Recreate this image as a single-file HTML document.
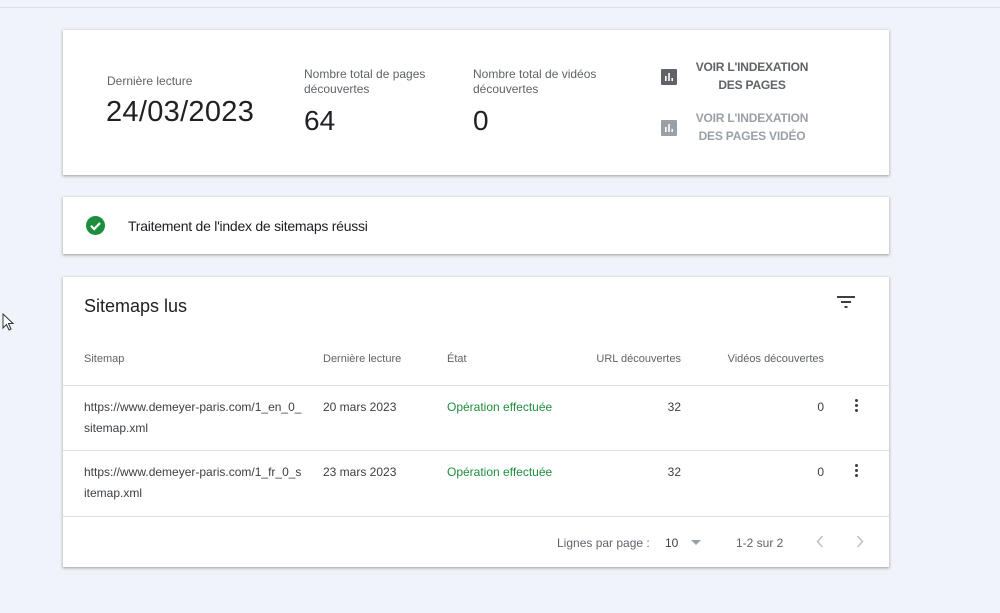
<!DOCTYPE html>
<html><head><meta charset="utf-8"><style>
body{margin:0;width:1000px;height:613px;background:#f1f3fa;font-family:"Liberation Sans",Arial,sans-serif;position:relative;overflow:hidden;color:#202124}
.a{position:absolute;white-space:nowrap}
.card{position:absolute;left:63px;width:826px;background:#fff;box-shadow:0 1px 2px rgba(60,64,67,.3),0 1px 3px 1px rgba(60,64,67,.15)}
.lbl{font-size:12px;color:#5f6368;line-height:15px}
.big{font-size:28px;color:#202124}
.btn{font-size:12px;font-weight:bold;color:#5f6368;text-align:center;line-height:18px;letter-spacing:-.2px}
.th{font-size:11px;color:#5f6368}
.td{font-size:12px;color:#3c4043;line-height:21px}
.hr{position:absolute;left:0;width:826px;height:1px;background:#e0e0e0}
.dots{position:absolute;width:3px}
.dots i{display:block;width:3px;height:3px;border-radius:50%;background:#3c4043;margin-bottom:2px}
</style></head><body>
<div class="a" style="left:0;top:7px;width:1000px;height:1px;background:#dde0e6"></div>
<svg class="a" style="left:2px;top:313px" width="12" height="19" viewBox="0 0 12 19"><path d="M1 1 L1 15 L4.5 11.5 L7 17 L9 16 L6.5 10.5 L11 10.5 Z" fill="#fff" stroke="#333" stroke-width="1"/></svg>

<div class="card" style="top:30px;height:145px">
 <div class="a lbl" style="left:44px;top:44px">Dernière lecture</div>
 <div class="a big" style="left:43px;top:66px;font-size:29px;letter-spacing:0.3px">24/03/2023</div>
 <div class="a lbl" style="left:241px;top:37px">Nombre total de pages<br>découvertes</div>
 <div class="a big" style="left:241px;top:75px">64</div>
 <div class="a lbl" style="left:410px;top:37px">Nombre total de vidéos<br>découvertes</div>
 <div class="a big" style="left:410px;top:75px">0</div>
 <svg class="a" style="left:598px;top:39px" width="16" height="16"><rect width="16" height="16" rx="1" fill="#5f6368"/><rect x="4" y="7" width="1.6" height="5" fill="#fff"/><rect x="7.2" y="4" width="1.6" height="8" fill="#fff"/><rect x="10.4" y="9" width="1.6" height="3" fill="#fff"/></svg>
 <div class="a btn" style="left:626px;top:28px;width:126px">VOIR L'INDEXATION<br>DES PAGES</div>
 <svg class="a" style="left:598px;top:90px" width="16" height="16"><rect width="16" height="16" rx="1" fill="#9aa0a6"/><rect x="4" y="7" width="1.6" height="5" fill="#fff"/><rect x="7.2" y="4" width="1.6" height="8" fill="#fff"/><rect x="10.4" y="9" width="1.6" height="3" fill="#fff"/></svg>
 <div class="a btn" style="left:626px;top:79px;width:126px;color:#9aa0a6">VOIR L'INDEXATION<br>DES PAGES VIDÉO</div>
</div>

<div class="card" style="top:197px;height:57px">
 <svg class="a" style="left:23px;top:19px" width="19" height="19"><circle cx="9.5" cy="9.5" r="9.5" fill="#1e8e3e"/><path d="M5 9.8 L8.2 13 L14 7" stroke="#fff" stroke-width="2.2" fill="none"/></svg>
 <div class="a" style="left:65px;top:21px;font-size:14px;letter-spacing:-0.25px;color:#202124">Traitement de l'index de sitemaps réussi</div>
</div>

<div class="card" style="top:277px;height:290px">
 <div class="a" style="left:21px;top:19px;font-size:18px;color:#202124">Sitemaps lus</div>
 <svg class="a" style="left:774px;top:19px" width="18" height="12"><rect x="0" y="0" width="18" height="2" fill="#3c4043"/><rect x="4" y="5" width="10" height="2" fill="#3c4043"/><rect x="7.5" y="10" width="3" height="2" fill="#3c4043"/></svg>
 <div class="a th" style="left:21px;top:76px">Sitemap</div>
 <div class="a th" style="left:260px;top:76px">Dernière lecture</div>
 <div class="a th" style="left:384px;top:76px">État</div>
 <div class="a th" style="right:208px;top:76px">URL découvertes</div>
 <div class="a th" style="right:65px;top:76px">Vidéos découvertes</div>
 <div class="hr" style="top:108px"></div>
 <div class="a td" style="left:21px;top:120px">https://www.demeyer-paris.com/1_en_0_<br>sitemap.xml</div>
 <div class="a td" style="left:260px;top:120px">20 mars 2023</div>
 <div class="a td" style="left:384px;top:120px;color:#1e8e3e">Opération effectuée</div>
 <div class="a td" style="right:208px;top:120px">32</div>
 <div class="a td" style="right:65px;top:120px">0</div>
 <div class="dots" style="left:792px;top:122px"><i></i><i></i><i></i></div>
 <div class="hr" style="top:173px"></div>
 <div class="a td" style="left:21px;top:185px">https://www.demeyer-paris.com/1_fr_0_s<br>itemap.xml</div>
 <div class="a td" style="left:260px;top:185px">23 mars 2023</div>
 <div class="a td" style="left:384px;top:185px;color:#1e8e3e">Opération effectuée</div>
 <div class="a td" style="right:208px;top:185px">32</div>
 <div class="a td" style="right:65px;top:185px">0</div>
 <div class="dots" style="left:792px;top:187px"><i></i><i></i><i></i></div>
 <div class="hr" style="top:239px"></div>
 <div class="a" style="left:494px;top:259px;font-size:12px;color:#5f6368">Lignes par page :</div>
 <div class="a" style="left:602px;top:259px;font-size:12px;color:#3c4043">10</div>
 <svg class="a" style="left:628px;top:263px" width="10" height="6"><path d="M0 0 L10 0 L5 5Z" fill="#9aa0a6"/></svg>
 <div class="a" style="left:673px;top:259px;font-size:12px;color:#5f6368">1-2 sur 2</div>
 <svg class="a" style="left:753px;top:258px" width="8" height="13"><path d="M6.5 1 L1.5 6.5 L6.5 12" stroke="#bdc1c6" stroke-width="1.5" fill="none"/></svg>
 <svg class="a" style="left:793px;top:258px" width="8" height="13"><path d="M1.5 1 L6.5 6.5 L1.5 12" stroke="#bdc1c6" stroke-width="1.5" fill="none"/></svg>
</div>
</body></html>
